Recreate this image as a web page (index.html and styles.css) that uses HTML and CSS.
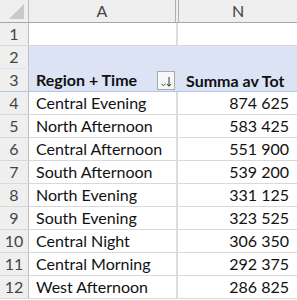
FILE: index.html
```html
<!DOCTYPE html>
<html>
<head>
<meta charset="utf-8">
<link rel="stylesheet" href="styles.css">
</head>
<body>
<div class="sheet">
  <div class="row head">
    <div class="rh corner"><span class="tri"></span></div>
    <div class="ca colhead">A</div>
    <div class="hid"></div>
    <div class="cn colhead">N</div>
  </div>
  <div class="row">
    <div class="rh">1</div>
    <div class="ca"></div>
    <div class="sep"></div>
    <div class="cn"></div>
  </div>
  <div class="row pv pv-top">
    <div class="rh">2</div>
    <div class="ca"></div>
    <div class="sep"></div>
    <div class="cn"></div>
  </div>
  <div class="row pv pv-head">
    <div class="rh">3</div>
    <div class="ca bold flexcell"><span>Region + Time</span>
      <span class="fbtn"><svg width="16" height="17" viewBox="0 0 16 17"><path d="M3.5 12 L5.5 13.5 L7.5 12" fill="none" stroke="#444" stroke-width="1"/><path d="M11 5 V14" stroke="#333" stroke-width="1"/><path d="M9 12 L11 14.3 L13 12" fill="none" stroke="#333" stroke-width="1"/></svg></span>
    </div>
    <div class="sep"></div>
    <div class="cn bold">Summa av Tot</div>
  </div>
  <div class="row"><div class="rh">4</div><div class="ca">Central Evening</div><div class="sep"></div><div class="cn num">874 625</div></div>
  <div class="row"><div class="rh">5</div><div class="ca">North Afternoon</div><div class="sep"></div><div class="cn num">583 425</div></div>
  <div class="row"><div class="rh">6</div><div class="ca">Central Afternoon</div><div class="sep"></div><div class="cn num">551 900</div></div>
  <div class="row"><div class="rh">7</div><div class="ca">South Afternoon</div><div class="sep"></div><div class="cn num">539 200</div></div>
  <div class="row"><div class="rh">8</div><div class="ca">North Evening</div><div class="sep"></div><div class="cn num">331 125</div></div>
  <div class="row"><div class="rh">9</div><div class="ca">South Evening</div><div class="sep"></div><div class="cn num">323 525</div></div>
  <div class="row"><div class="rh">10</div><div class="ca">Central Night</div><div class="sep"></div><div class="cn num">306 350</div></div>
  <div class="row"><div class="rh">11</div><div class="ca">Central Morning</div><div class="sep"></div><div class="cn num">292 375</div></div>
  <div class="row"><div class="rh">12</div><div class="ca">West Afternoon</div><div class="sep"></div><div class="cn num">286 825</div></div>
</div>
</body>
</html>
```
FILE: styles.css
```css
html, body {
  margin: 0;
  padding: 0;
  background: #ffffff;
  overflow: hidden;
}
.sheet {
  width: 297px;
  font-family: Lato, "Liberation Sans", sans-serif;
  font-size: 16px;
  color: #111;
}
.row {
  display: flex;
  height: 22px;
  border-bottom: 1px solid #d9d9d9;
  line-height: 22px;
}
.rh {
  width: 28px;
  flex: none;
  background: #efefef;
  border-right: 1px solid #bdbdbd;
  text-align: center;
  color: #444;
  font-size: 16px;
}
.ca {
  width: 140px;
  flex: none;
  padding-left: 7px;
  white-space: nowrap;
  overflow: hidden;
}
.sep {
  width: 2px;
  flex: none;
  background: #dcdcdc;
}
.cn {
  flex: 1;
  padding-right: 8px;
  white-space: nowrap;
  overflow: hidden;
}
.num {
  text-align: right;
}
.head {
  background: #efefef;
  border-bottom: 1px solid #a6a6a6;
  color: #444;
}
.head .ca {
  padding-left: 0;
  border-right: 1px solid #b0b0b0;
  box-sizing: border-box;
  width: 147px;
}
.head .hid {
  width: 2px;
  flex: none;
  background: #efefef;
}
.head .cn {
  border-left: 1px solid #b0b0b0;
  padding-right: 0;
}
.colhead {
  text-align: center;
}
.corner {
  position: relative;
}
.tri {
  position: absolute;
  right: 4px;
  bottom: 3px;
  width: 0;
  height: 0;
  border-left: 15px solid transparent;
  border-bottom: 15px solid #c9c9c9;
}
.pv .ca, .pv .cn, .pv .sep {
  background: #dbe3f4;
}
.pv-top {
  border-bottom-color: #dbe3f4;
}
.pv-head {
  border-bottom-color: #b4c6e7;
}
.pv-head .ca, .pv-head .cn {
  line-height: 24px;
}
.bold {
  font-weight: bold;
}
.flexcell {
  display: flex;
  justify-content: space-between;
  align-items: center;
  padding-right: 0;
}
.fbtn {
  border: 1px solid #a9a9a9;
  background: #f7f7f7;
  display: flex;
  align-items: center;
  justify-content: center;
  box-sizing: border-box;
  width: 18px;
  height: 19px;
  margin-right: 1px;
}
.pv-head .cn {
  padding-left: 8px;
}
```
